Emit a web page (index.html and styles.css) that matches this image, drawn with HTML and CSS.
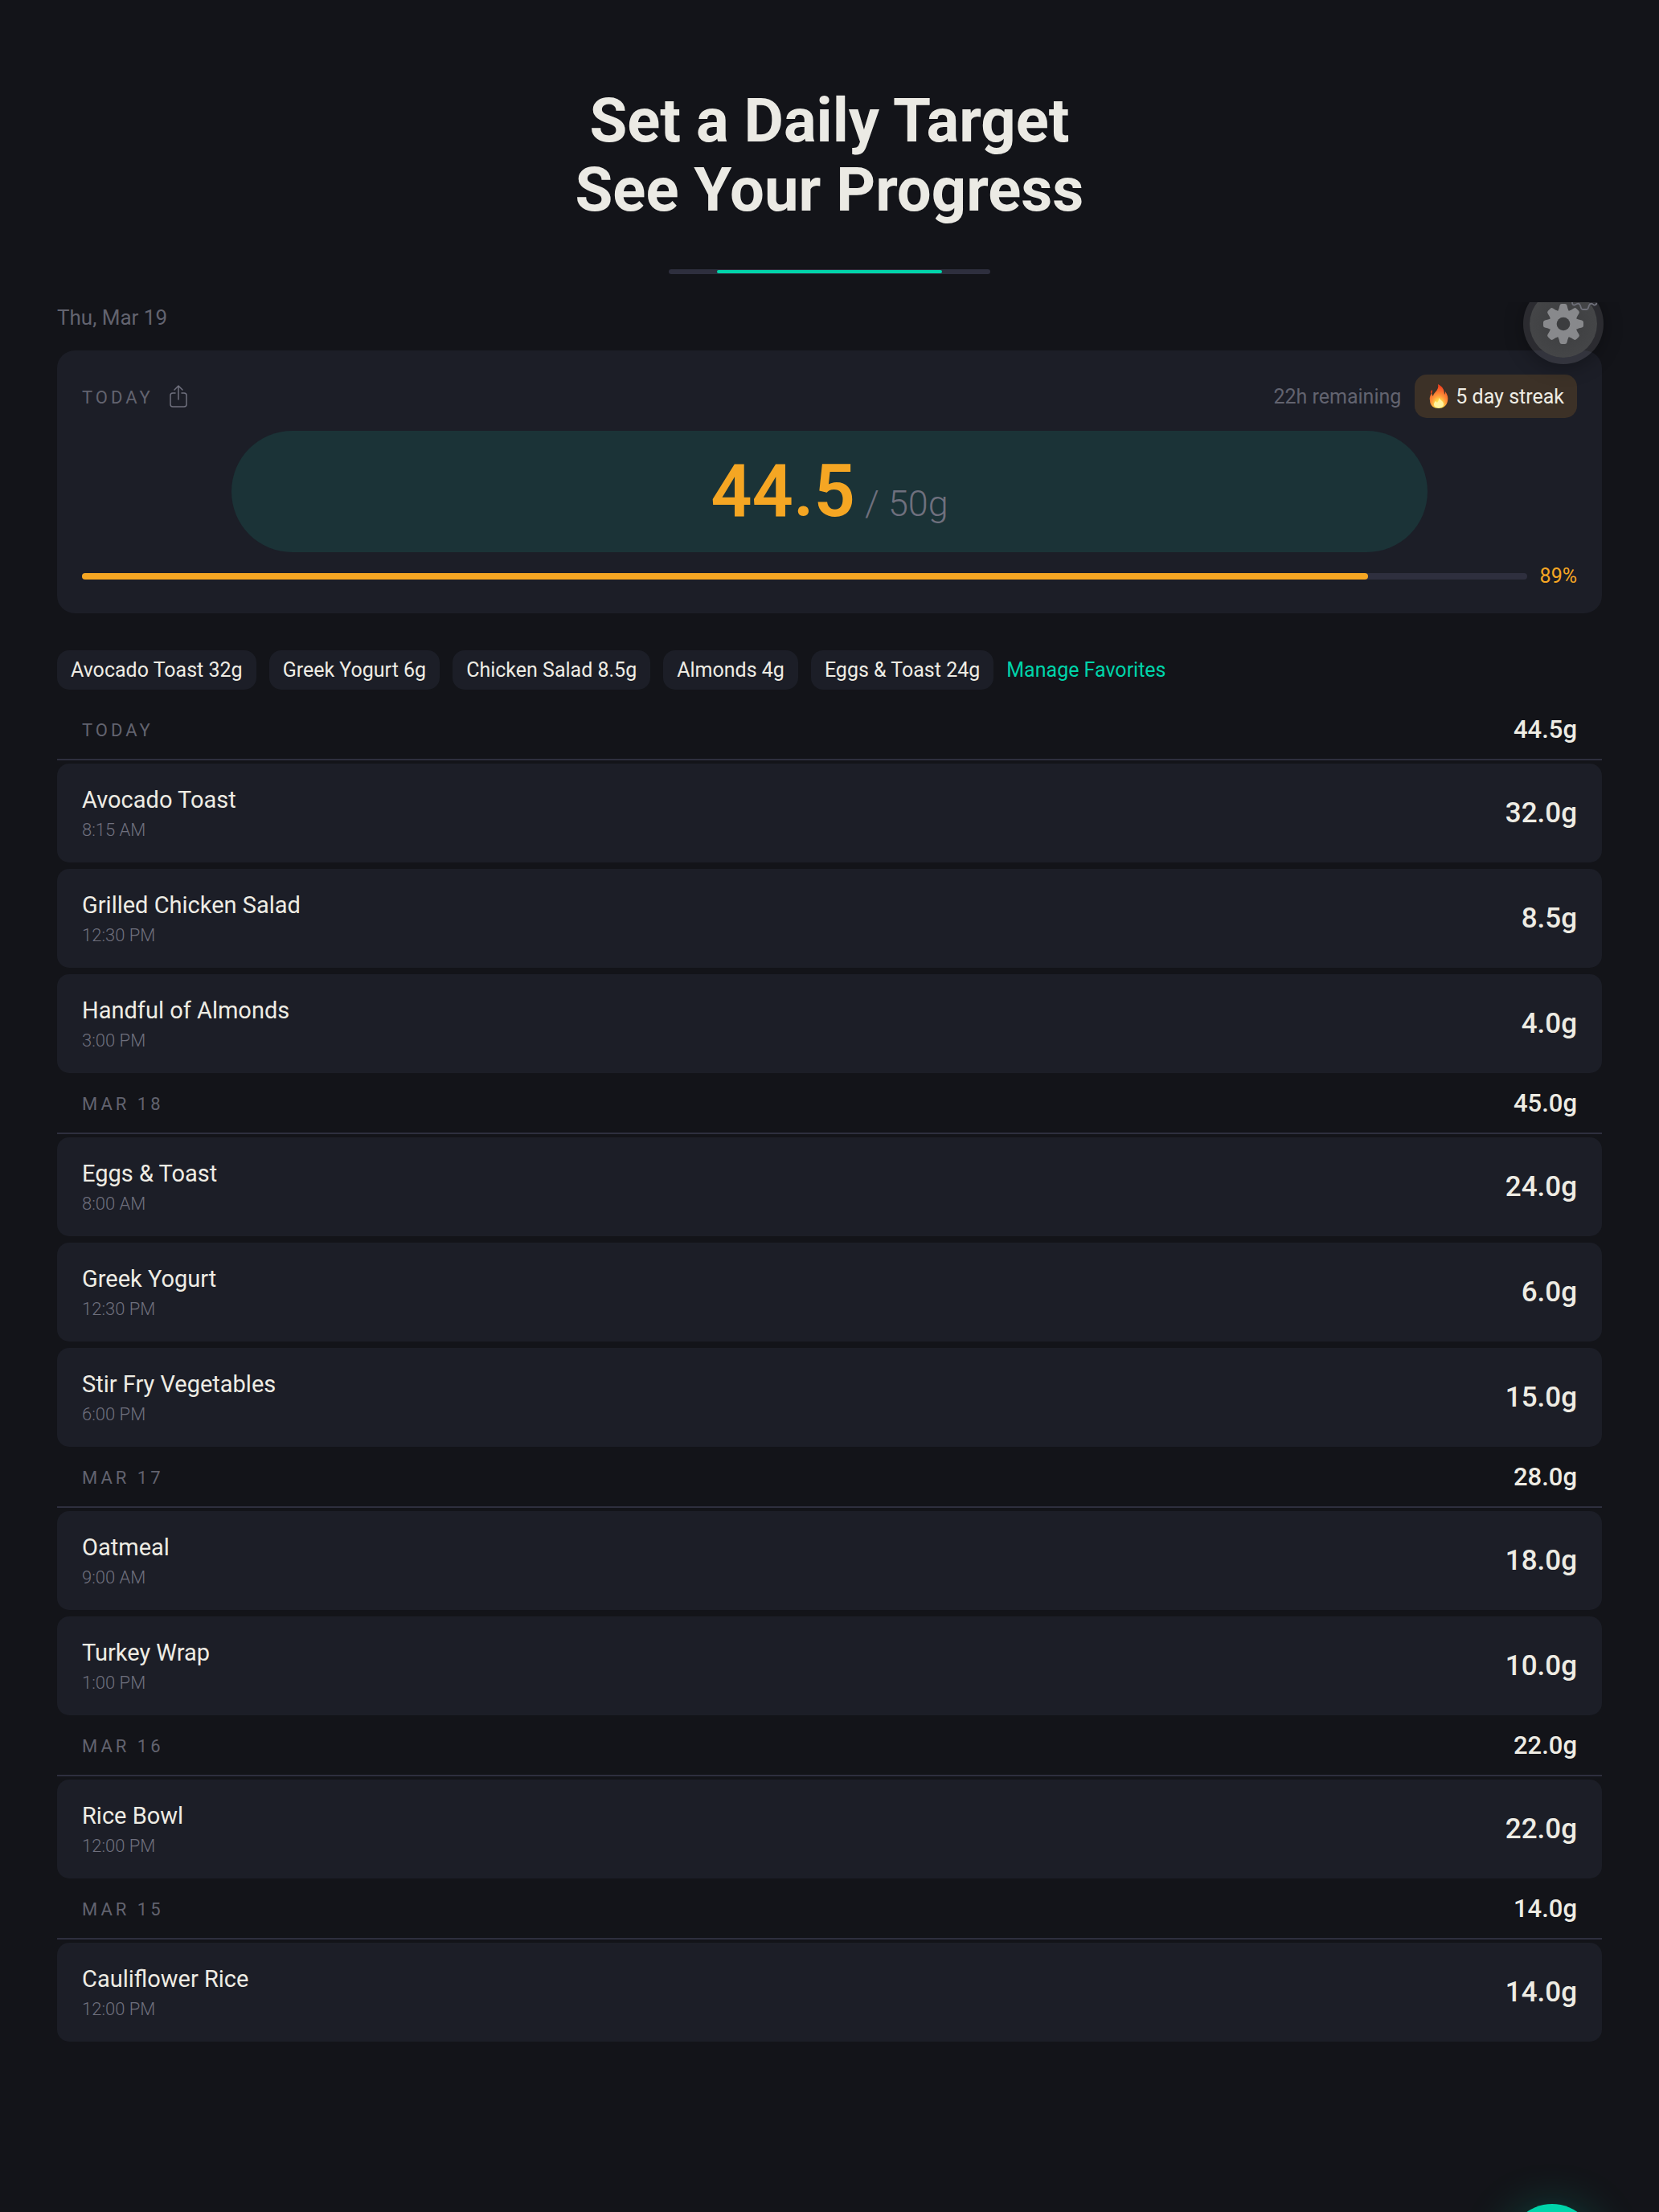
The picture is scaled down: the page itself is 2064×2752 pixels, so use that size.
FILE: index.html
```html
<!DOCTYPE html>
<html lang="en">
<head>
    <meta charset="UTF-8">
    <meta name="viewport" content="width=device-width, initial-scale=1.0">
    <title>Daily Target</title>
    <link rel="stylesheet" href="styles.css">
</head>
<body>
    <header class="hero">
        <h1>Set a Daily Target<br>See Your Progress</h1>
        <div class="hero-bar"><span></span></div>
    </header>

    <main class="app">
        <button class="settings-btn" type="button" aria-label="Settings">
            <svg class="gear" viewBox="-26 -26 52 52" aria-hidden="true">
                <g fill="#88898c">
                    <path id="tooth" d="M-7 -15 Q-6 -18 -5.5 -19 L-4.5 -23 Q-4 -25 -2 -25 H2 Q4 -25 4.5 -23 L5.5 -19 Q6 -18 7 -15 V15 Q6 18 5.5 19 L4.5 23 Q4 25 2 25 H-2 Q-4 25 -4.5 23 L-5.5 19 Q-6 18 -7 15 Z"/>
                    <use href="#tooth" transform="rotate(45)"/>
                    <use href="#tooth" transform="rotate(90)"/>
                    <use href="#tooth" transform="rotate(135)"/>
                    <circle r="17.5"/>
                </g>
                <circle r="8.3" fill="#3c3d3f"/>
            </svg>
            <svg class="gear-outline" viewBox="0 0 32 10" aria-hidden="true">
                <path d="M1 0 Q1 4 4 3.5 L7 2 Q10 1 11 4 L12 7 Q12.5 9 14 9 H19 Q20.500 9 21 7 L22 4 Q23 1 26 2 L28 3.500 Q31 4 31.500 1" fill="none" stroke="#6f707a" stroke-width="1.8"/>
            </svg>
        </button>

        <p class="date">Thu, Mar 19</p>

        <section class="summary">
            <div class="summary-top">
                <h2 class="label">TODAY</h2>
                <button class="share-btn" type="button" aria-label="Share">
                    <svg viewBox="0 0 24 30" aria-hidden="true">
                        <path d="M8 11 H5 Q2 11 2 14 V25 Q2 28 5 28 H19 Q22 28 22 25 V14 Q22 11 19 11 H16 M12 19 V2 M7 7 L12 2 L17 7" fill="none" stroke="#6f707e" stroke-width="1.5" stroke-linecap="round" stroke-linejoin="round"/>
                    </svg>
                </button>
                <span class="remaining">22h remaining</span>
                <span class="streak">
                    <svg viewBox="0 0 24 30" aria-hidden="true">
                        <defs>
                            <radialGradient id="flame" cx="50%" cy="88%" r="80%">
                                <stop offset="0" stop-color="#fffbc8"/>
                                <stop offset="0.25" stop-color="#ffe04a"/>
                                <stop offset="0.5" stop-color="#ff9a3c"/>
                                <stop offset="1" stop-color="#f4431f"/>
                            </radialGradient>
                        </defs>
                        <path d="M11 0 C17 3 19 7 19 13 C20 12 20 10 20 9 C23 13 24 17 23 21 C22 27 17 30 12 30 C6 30 1 27 1 20 C0 16 2 14 3 11 C4 13 4 14 5 15 C5 10 13 8 11 0 Z" fill="url(#flame)"/>
                        <path d="M4 7 C2 8 1 11 3 12 C4 10 4 9 4 7 Z" fill="#e8401c"/>
                        <path d="M12 17 C14 20 18 21 18 25 C18 28 15 29 12 29 C9 29 6 28 6 25 C6 23 7 22 8 21 L10 23 C12 21 12 19 12 17 Z" fill="#fff3a0"/>
                    </svg>
                    5 day streak
                </span>
            </div>
            <div class="total">
                <strong>44.5</strong>
                <span>/ 50g</span>
            </div>
            <div class="progress">
                <div class="track" role="progressbar" aria-label="Daily target" aria-valuenow="89" aria-valuemin="0" aria-valuemax="100">
                    <div class="fill" style="width: 89%"></div>
                </div>
                <span class="percent">89%</span>
            </div>
        </section>

        <nav class="favorites" aria-label="Favorites">
            <button type="button">Avocado Toast 32g</button>
            <button type="button">Greek Yogurt 6g</button>
            <button type="button">Chicken Salad 8.5g</button>
            <button type="button">Almonds 4g</button>
            <button type="button">Eggs &amp; Toast 24g</button>
            <a href="#favorites">Manage Favorites</a>
        </nav>

        <section class="day">
            <div class="day-head"><h2 class="label">TODAY</h2><span class="day-total">44.5g</span></div>
            <ul>
                <li><div><h3>Avocado Toast</h3><time>8:15 AM</time></div><span class="amount">32.0g</span></li>
                <li><div><h3>Grilled Chicken Salad</h3><time>12:30 PM</time></div><span class="amount">8.5g</span></li>
                <li><div><h3>Handful of Almonds</h3><time>3:00 PM</time></div><span class="amount">4.0g</span></li>
            </ul>
        </section>

        <section class="day">
            <div class="day-head"><h2 class="label">MAR 18</h2><span class="day-total">45.0g</span></div>
            <ul>
                <li><div><h3>Eggs &amp; Toast</h3><time>8:00 AM</time></div><span class="amount">24.0g</span></li>
                <li><div><h3>Greek Yogurt</h3><time>12:30 PM</time></div><span class="amount">6.0g</span></li>
                <li><div><h3>Stir Fry Vegetables</h3><time>6:00 PM</time></div><span class="amount">15.0g</span></li>
            </ul>
        </section>

        <section class="day">
            <div class="day-head"><h2 class="label">MAR 17</h2><span class="day-total">28.0g</span></div>
            <ul>
                <li><div><h3>Oatmeal</h3><time>9:00 AM</time></div><span class="amount">18.0g</span></li>
                <li><div><h3>Turkey Wrap</h3><time>1:00 PM</time></div><span class="amount">10.0g</span></li>
            </ul>
        </section>

        <section class="day">
            <div class="day-head"><h2 class="label">MAR 16</h2><span class="day-total">22.0g</span></div>
            <ul>
                <li><div><h3>Rice Bowl</h3><time>12:00 PM</time></div><span class="amount">22.0g</span></li>
            </ul>
        </section>

        <section class="day">
            <div class="day-head"><h2 class="label">MAR 15</h2><span class="day-total">14.0g</span></div>
            <ul>
                <li><div><h3>Cauliflower Rice</h3><time>12:00 PM</time></div><span class="amount">14.0g</span></li>
            </ul>
        </section>
    </main>

    <button class="add-btn" type="button" aria-label="Add food"></button>
</body>
</html>
```
FILE: styles.css
```css
* {
    box-sizing: border-box;
}

body {
    margin: 0;
    background: #131419;
    color: #eeece4;
    font-family: Roboto, "Liberation Sans", sans-serif;
    font-size: 25px;
}

h1, h2, h3, p, ul {
    margin: 0;
    padding: 0;
    font-weight: 400;
}

ul {
    list-style: none;
}

button {
    border: none;
    padding: 0;
    background: none;
    color: inherit;
    font: inherit;
    cursor: pointer;
}

/* Heading */
.hero {
    padding: 107px 71px 35px;
    text-align: center;
}

.hero h1 {
    font-size: 76px;
    font-weight: 700;
    line-height: 86px;
    color: #ebeae4;
}

.hero-bar {
    width: 400px;
    height: 6px;
    margin: 56px auto 0;
    padding: 1px 60px;
    border-radius: 3px;
    background: #2e2f3e;
}

.hero-bar span {
    display: block;
    height: 4px;
    border-radius: 2px;
    background: #00d4aa;
}

/* App */
.app {
    position: relative;
    overflow: hidden;
    padding: 0 71px 100px;
}

.date {
    margin-bottom: 22px;
    font-size: 26px;
    line-height: 38px;
    color: #62636f;
}

.settings-btn {
    position: absolute;
    top: -23px;
    right: 69px;
    width: 100px;
    height: 100px;
    border: 8px solid rgba(255, 255, 255, 0.1);
    border-radius: 50%;
    background: radial-gradient(#3c3d3f, #48494b);
    background-clip: padding-box;
    box-shadow: 0 4px 24px rgba(0, 0, 0, 0.3);
}

.gear {
    display: block;
    width: 52px;
    height: 52px;
    margin: auto;
}

.gear-outline {
    position: absolute;
    top: 15px;
    right: 0;
    width: 32px;
    height: 10px;
}

.summary {
    padding: 30px 31px 34px;
    border-radius: 22px;
    background: #1c1e27;
}

.summary-top {
    display: flex;
    align-items: center;
    height: 54px;
}

.label {
    padding-top: 3px;
    font-size: 22px;
    line-height: 30px;
    letter-spacing: 4px;
    color: #62636f;
}

.share-btn {
    height: 30px;
    margin-left: 19px;
}

.share-btn svg {
    display: block;
    width: 24px;
    height: 30px;
}

.remaining {
    margin-left: auto;
    color: #62636f;
}

.streak {
    display: flex;
    align-items: center;
    gap: 9px;
    height: 54px;
    margin-left: 17px;
    padding: 0 16px 0 18px;
    border-radius: 15px;
    background: #3c3127;
}

.streak svg {
    width: 24px;
    height: 30px;
}

.total {
    display: flex;
    justify-content: center;
    align-items: baseline;
    gap: 12px;
    width: 80%;
    height: 151px;
    margin: 16px auto 18px;
    border-radius: 76px;
    background: #1b3337;
    line-height: 151px;
}

.total strong {
    font-size: 90px;
    font-weight: 600;
    color: #f5a623;
}

.total span {
    font-size: 45px;
    font-weight: 300;
    color: #6f707e;
}

.progress {
    display: flex;
    align-items: center;
    gap: 16px;
    line-height: 24px;
}

.track {
    flex: 1;
    height: 8px;
    border-radius: 4px;
    background: #2e2f3e;
}

.fill {
    height: 8px;
    border-radius: 4px;
    background: #f5a623;
}

.percent {
    color: #f5a623;
}

/* Favorites */
.favorites {
    display: flex;
    flex-wrap: wrap;
    align-items: center;
    gap: 16px;
    margin: 46px 0 12px;
}

.favorites button {
    height: 49px;
    padding: 0 17px;
    border-radius: 15px;
    background: #1c1e27;
}

.favorites a {
    color: #00d4aa;
    text-decoration: none;
}

/* Log */
.day-head {
    display: flex;
    justify-content: space-between;
    align-items: center;
    height: 76px;
    margin-bottom: 4px;
    padding: 0 31px;
    border-bottom: 2px solid #2e2f3e;
}

.day-total {
    font-size: 31px;
    font-weight: 500;
}

.day ul {
    display: flex;
    flex-direction: column;
    gap: 8px;
}

.day li {
    display: flex;
    justify-content: space-between;
    align-items: center;
    padding: 24px 31px;
    border-radius: 15px;
    background: #1c1e27;
}

.day h3 {
    font-size: 29px;
    line-height: 42px;
}

.day time {
    display: block;
    font-size: 22px;
    font-weight: 300;
    line-height: 33px;
    color: #6f707e;
}

.amount {
    font-size: 35px;
    font-weight: 500;
}

.add-btn {
    position: fixed;
    right: 78px;
    bottom: -100px;
    width: 110px;
    height: 110px;
    border-radius: 50%;
    background: #00d4aa;
    box-shadow: 0 8px 60px rgba(0, 212, 170, 0.3);
}
```
